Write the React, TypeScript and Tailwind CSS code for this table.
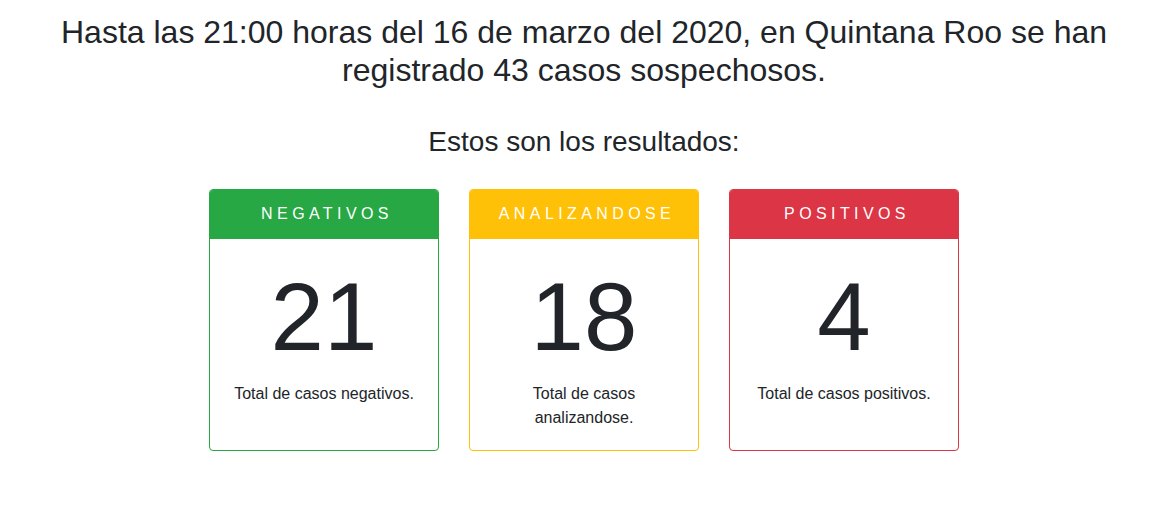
const cards = [
  {
    title: "Negativos",
    count: 21,
    text: "Total de casos negativos.",
    header: "bg-[#28a745]",
    border: "border-[#28a745]",
  },
  {
    title: "Analizandose",
    count: 18,
    text: "Total de casos analizandose.",
    header: "bg-[#ffc107]",
    border: "border-[#ffc107]",
  },
  {
    title: "Positivos",
    count: 4,
    text: "Total de casos positivos.",
    header: "bg-[#dc3545]",
    border: "border-[#dc3545]",
  },
]

export default function App() {
  return (
    <div className="min-h-[512px] bg-white pl-[17px] text-[#212529] font-['Liberation_Sans',Arial,sans-serif]">
      <h2 className="pt-[13px] text-center text-[32px] leading-[1.2]">
        Hasta las 21:00 horas del 16 de marzo del 2020, en Quintana Roo se han registrado 43 casos sospechosos.
      </h2>
      <h3 className="mt-[35px] text-center text-[28px] leading-[1.2]">Estos son los resultados:</h3>

      <div className="mt-[31px] flex justify-center gap-[30px]">
        {cards.map((card) => (
          <div key={card.title} className={`w-[230px] rounded-[4px] border ${card.border} flex flex-col overflow-hidden`}>
            <div
              className={`${card.header} ${card.border} border-b px-5 py-3 text-center text-base leading-6 uppercase tracking-[4.4px] indent-[6px] text-white`}
            >
              {card.title}
            </div>
            <div className="flex-1 p-5 text-center">
              <h1 className="mb-2 text-[96px] leading-[115px]">{card.count}</h1>
              <p className="text-base leading-6">{card.text}</p>
            </div>
          </div>
        ))}
      </div>
    </div>
  )
}
